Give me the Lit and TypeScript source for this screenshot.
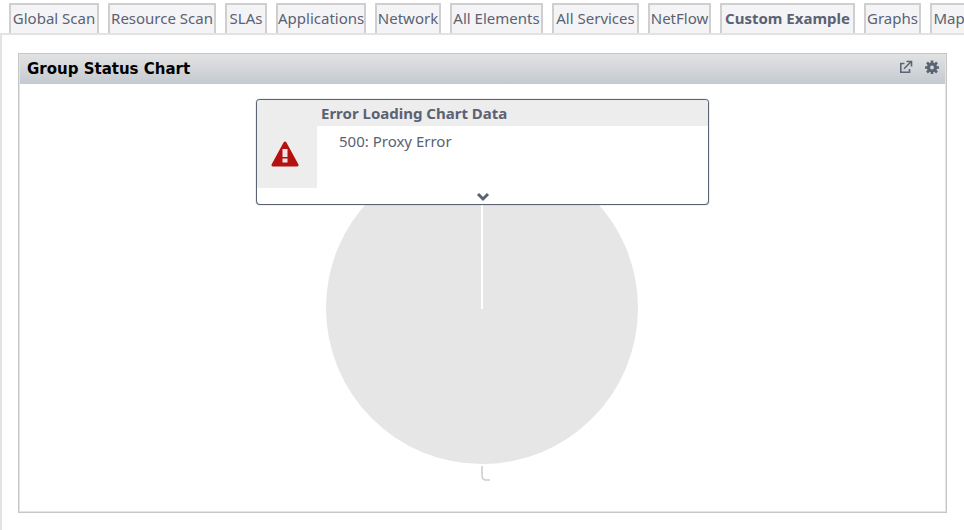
import { LitElement, html, css } from "lit";
import { customElement, state } from "lit/decorators.js";
import { classMap } from "lit/directives/class-map.js";
import { styleMap } from "lit/directives/style-map.js";

const TABS = [
  { name: "Global Scan", width: 90 },
  { name: "Resource Scan", width: 108 },
  { name: "SLAs", width: 42 },
  { name: "Applications", width: 90 },
  { name: "Network", width: 66 },
  { name: "All Elements", width: 93 },
  { name: "All Services", width: 87 },
  { name: "NetFlow", width: 63 },
  { name: "Custom Example", width: 135 },
  { name: "Graphs", width: 57 },
  { name: "Map", width: 38 },
];

@customElement("error-notice")
class ErrorNotice extends LitElement {
  static styles = css`
    :host {
      display: block;
    }
    .box {
      box-sizing: border-box;
      display: grid;
      grid-template-columns: 60px 1fr;
      grid-template-rows: 26px 62px 16px;
      border: 1px solid #5a6273;
      border-radius: 4px;
      background: #fff;
      box-shadow: 0 0 1px #5a6273;
      overflow: hidden;
      color: #5a6273;
      font-size: 15px;
    }
    .side {
      grid-row: 1 / 3;
      background: #ededed;
      display: flex;
      justify-content: center;
      padding: 40px 4px 0 0;
    }
    .title {
      margin: 0;
      padding-left: 4px;
      background: #ededed;
      font-size: 15px;
      line-height: 26px;
    }
    .text {
      margin: 0;
      padding: 4px 22px;
      line-height: 22px;
    }
    .more {
      grid-column: 1 / 3;
      justify-self: center;
      display: flex;
      padding: 4px 0 0;
      border: 0;
      background: none;
      color: inherit;
    }
  `;

  render() {
    return html`
      <section class="box" role="alert">
        <div class="side">
          <svg width="28" height="28" viewBox="0 0 28 28" aria-hidden="true">
            <path
              d="M14 3 L26 25 H2 Z"
              fill="#b51111"
              stroke="#b51111"
              stroke-width="3"
              stroke-linejoin="round"
            />
            <path d="M11.5 9h5v8h-5z M11.5 18.5h5v4h-5z" fill="#f2e4e4" />
          </svg>
        </div>
        <h3 class="title">Error Loading Chart Data</h3>
        <p class="text">500: Proxy Error</p>
        <button class="more" aria-label="Show details">
          <svg width="14" height="10" viewBox="0 0 14 10">
            <path d="M2 2l5 5 5-5" fill="none" stroke="currentColor" stroke-width="3" />
          </svg>
        </button>
      </section>
    `;
  }
}

@customElement("app-root")
class AppRoot extends LitElement {
  @state() active = "Custom Example";

  static styles = css`
    :host {
      display: block;
      overflow: hidden;
      font-family: "Noto Sans", "Open Sans", sans-serif;
      font-size: 15px;
      color: #5a6273;
    }
    .tabs {
      display: flex;
      gap: 9px;
      padding: 3px 0 0 9px;
    }
    .tab {
      box-sizing: border-box;
      flex: none;
      height: 30px;
      padding: 0 0 3px;
      border: 2px solid #cfcfcf;
      border-bottom: 0;
      background: #f4f4f6;
      color: inherit;
      font: inherit;
      text-align: center;
      white-space: nowrap;
    }
    .active {
      font-weight: bold;
    }
    .page {
      border-top: 2px solid #e3e3e6;
      border-left: 2px solid #e3e3e6;
      padding: 18px 17px 17px 16px;
    }
    .panel {
      border: 1px solid #c6c6c6;
      box-shadow: inset 0 0 0 1px #e4e4e4;
      padding: 0 1px 1px;
    }
    .head {
      display: flex;
      align-items: center;
      gap: 12px;
      height: 30px;
      padding: 0 6px 0 7px;
      background: linear-gradient(#e2e2e3, #c4cad0);
    }
    .name {
      flex: 1;
      margin: 0;
      font: bold 15px/30px "DejaVu Sans", sans-serif;
      color: #000;
    }
    .tool {
      display: flex;
      padding: 0 0 4px;
      border: 0;
      background: none;
      color: #5a6473;
    }
    .body {
      position: relative;
      display: flex;
      justify-content: center;
      padding: 66px 2px 29px 0;
    }
    .notice {
      position: absolute;
      top: 15px;
      left: 0;
      right: 0;
      width: 453px;
      margin: 0 auto;
    }
  `;

  render() {
    return html`
      <nav class="tabs" role="tablist">
        ${TABS.map(
          ({ name, width }) => html`<button
            role="tab"
            aria-selected=${name === this.active}
            class=${classMap({ tab: true, active: name === this.active })}
            style=${styleMap({ width: `${width}px` })}
            @click=${() => (this.active = name)}
          >${name}</button>`
        )}
      </nav>
      <main class="page">
        <section class="panel">
          <header class="head">
            <h2 class="name">Group Status Chart</h2>
            <button class="tool" aria-label="Open in new window">
              <svg width="14" height="14" viewBox="0 0 14 14" fill="none" stroke="currentColor">
                <path d="M5.5 3.5H1.8v8.7h8.7V9" stroke-width="1.6" />
                <path d="M5 8.8L12 1.8" stroke-width="1.6" />
                <path d="M7.5 1.5h5v5" stroke-width="1.6" />
              </svg>
            </button>
            <button class="tool" aria-label="Settings">
              <svg width="14" height="14" viewBox="0 0 14 14" fill="none" stroke="currentColor">
                <circle cx="7" cy="7.5" r="3.5" stroke-width="3.2" />
                <path
                  d="M7 .5v3M7 11.5v3M0 7.5h3M11 7.5h3M2 2.5l2 2M10 10.5l2 2M12 2.5l-2 2M4 10.5l-2 2"
                  stroke-width="2.6"
                />
              </svg>
            </button>
          </header>
          <div class="body">
            <svg width="320" height="332" viewBox="0 0 320 332" role="img" aria-label="Group status pie chart">
              <circle cx="160" cy="158" r="156" fill="#e6e6e6" />
              <path d="M160 2v157" stroke="#fff" stroke-width="2" />
              <path
                d="M160 316v9q0 5 4 5h4"
                fill="none"
                stroke="#c9ccd2"
                stroke-width="1.5"
              />
            </svg>
            <error-notice class="notice"></error-notice>
          </div>
        </section>
      </main>
    `;
  }
}
